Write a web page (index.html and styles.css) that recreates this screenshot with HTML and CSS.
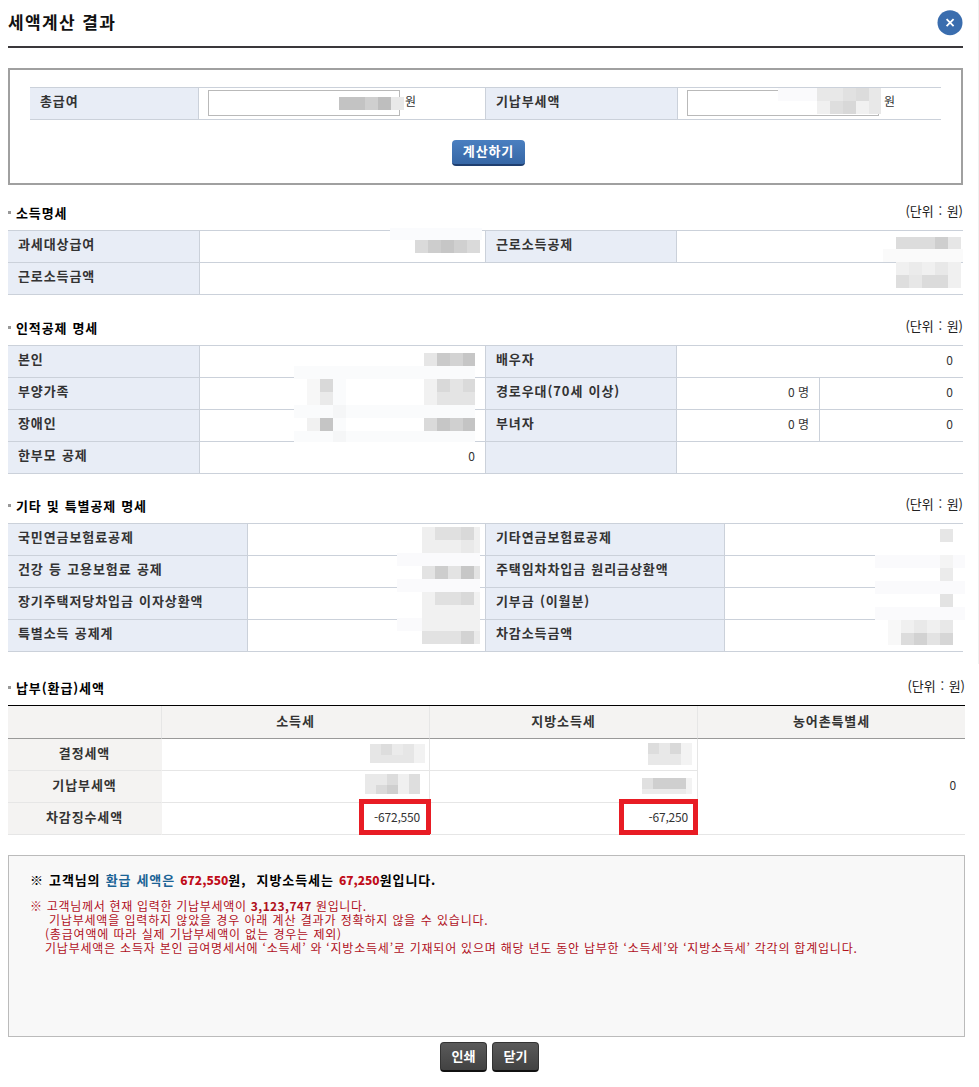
FILE: index.html
```html
<!DOCTYPE html>
<html lang="ko">
<head>
    <meta charset="UTF-8">
    <meta name="viewport" content="width=device-width, initial-scale=1.0">
    <title>세액계산 결과</title>
    <link rel="stylesheet" href="styles.css">
</head>
<body>
    <div class="popup">
        <div class="pop-header">
            <h1>세액계산 결과</h1>
            <button type="button" class="btn-x" aria-label="닫기">
                <svg width="26" height="26" viewBox="0 0 26 26">
                    <circle cx="13" cy="12.7" r="12.5" fill="#3a6dae"/>
                    <path d="M9.6 9.2 L16.6 16.2 M16.6 9.2 L9.6 16.2" stroke="#fff" stroke-width="1.8"/>
                </svg>
            </button>
        </div>

        <div class="calc-box">
            <div class="table-wrap">
                <table class="tbl tbl-form">
                    <colgroup><col class="f1"><col class="f2"><col class="f3"><col></colgroup>
                    <tr>
                        <th>총급여</th>
                        <td><div class="field"><input type="text"><span>원</span></div></td>
                        <th class="mid">기납부세액</th>
                        <td><div class="field"><input type="text"><span>원</span></div></td>
                    </tr>
                </table>
                <svg class="mosaic" viewBox="30 87 911 33" width="911" height="33">
                    <rect x="339" y="97" width="26" height="13" fill="#c3c3c3"/>
                    <rect x="365" y="97" width="13" height="13" fill="#cfcfcf"/>
                    <rect x="378" y="97" width="13" height="13" fill="#bebebe"/>
                    <rect x="391" y="97" width="13" height="13" fill="#e9e9e9"/>
                    <rect x="778" y="88" width="39" height="13" fill="#fafafc"/>
                    <rect x="817" y="88" width="64" height="26" fill="#e8e8e8"/>
                    <rect x="817" y="101" width="13" height="13" fill="#f0f0f0"/>
                    <rect x="830" y="101" width="13" height="13" fill="#dedede"/>
                    <rect x="843" y="88" width="13" height="13" fill="#e1e1e1"/>
                    <rect x="843" y="101" width="13" height="13" fill="#d8d8d8"/>
                    <rect x="856" y="88" width="13" height="13" fill="#dcdcdc"/>
                    <rect x="856" y="101" width="13" height="13" fill="#f1f1f1"/>
                </svg>
            </div>
            <button type="button" class="btn-calc">계산하기</button>
        </div>

        <div class="section sec1">
            <div class="sec-head"><h2>소득명세</h2><span class="unit">(단위 : 원)</span></div>
            <div class="table-wrap">
                <table class="tbl">
                    <colgroup><col class="c1"><col class="c2"><col class="c1"><col></colgroup>
                    <tr><th>과세대상급여</th><td></td><th class="mid">근로소득공제</th><td></td></tr>
                    <tr><th>근로소득금액</th><td colspan="3"></td></tr>
                </table>
                <svg class="mosaic" viewBox="8 230 955 65" width="955" height="65">
                    <rect x="390" y="228" width="92" height="12" fill="#fafbfd"/>
                    <rect x="415" y="240" width="65" height="13" fill="#dadada"/>
                    <rect x="428" y="240" width="13" height="13" fill="#cdcdcd"/>
                    <rect x="441" y="240" width="13" height="13" fill="#c6c6c6"/>
                    <rect x="454" y="240" width="13" height="13" fill="#d0d0d0"/>
                    <rect x="896" y="237" width="65" height="12" fill="#dcdcdc"/>
                    <rect x="935" y="237" width="13" height="12" fill="#cecece"/>
                    <rect x="948" y="237" width="13" height="12" fill="#e6e6e6"/>
                    <rect x="883" y="249" width="80" height="13" fill="#fafafa"/>
                    <rect x="896" y="262" width="65" height="26" fill="#f0f0f0"/>
                    <rect x="909" y="262" width="13" height="13" fill="#ebebeb"/>
                    <rect x="935" y="262" width="13" height="13" fill="#e8e8e8"/>
                    <rect x="896" y="275" width="13" height="13" fill="#dedede"/>
                    <rect x="909" y="275" width="13" height="13" fill="#e7e7e7"/>
                    <rect x="922" y="275" width="26" height="13" fill="#dbdbdb"/>
                </svg>
            </div>
        </div>

        <div class="section sec2">
            <div class="sec-head"><h2>인적공제 명세</h2><span class="unit">(단위 : 원)</span></div>
            <div class="table-wrap">
                <table class="tbl">
                    <colgroup><col class="c1"><col class="c2"><col class="c1"><col class="c3"><col></colgroup>
                    <tr><th>본인</th><td></td><th class="mid">배우자</th><td colspan="2">0</td></tr>
                    <tr><th>부양가족</th><td></td><th class="mid">경로우대(70세 이상)</th><td>0 명</td><td class="split">0</td></tr>
                    <tr><th>장애인</th><td></td><th class="mid">부녀자</th><td>0 명</td><td class="split">0</td></tr>
                    <tr><th>한부모 공제</th><td>0</td><th class="mid"></th><td colspan="2"></td></tr>
                </table>
                <svg class="mosaic" viewBox="8 345 955 129" width="955" height="129">
                    <rect x="424" y="353" width="13" height="13" fill="#e6e6e6"/>
                    <rect x="437" y="353" width="13" height="13" fill="#cacaca"/>
                    <rect x="450" y="353" width="13" height="13" fill="#d3d3d3"/>
                    <rect x="463" y="353" width="12" height="13" fill="#c6c6c6"/>
                    <rect x="294" y="366" width="181" height="13" fill="#fafbfc"/>
                    <rect x="333" y="366" width="13" height="75" fill="#fafbfc"/>
                    <rect x="307" y="379" width="13" height="26" fill="#f7f7f7"/>
                    <rect x="320" y="379" width="13" height="13" fill="#d9d9d9"/>
                    <rect x="320" y="392" width="13" height="13" fill="#eaeaea"/>
                    <rect x="424" y="379" width="51" height="26" fill="#e4e4e4"/>
                    <rect x="424" y="379" width="13" height="26" fill="#f1f1f1"/>
                    <rect x="437" y="379" width="13" height="13" fill="#d9d9d9"/>
                    <rect x="463" y="379" width="12" height="13" fill="#dadada"/>
                    <rect x="294" y="405" width="181" height="13" fill="#fafbfc"/>
                    <rect x="333" y="405" width="13" height="13" fill="#f5f6f7"/>
                    <rect x="307" y="418" width="13" height="13" fill="#f1f1f1"/>
                    <rect x="320" y="418" width="13" height="13" fill="#c5c5c5"/>
                    <rect x="424" y="418" width="13" height="13" fill="#dadada"/>
                    <rect x="437" y="418" width="13" height="13" fill="#c6c6c6"/>
                    <rect x="450" y="418" width="13" height="13" fill="#d0d0d0"/>
                    <rect x="463" y="418" width="12" height="13" fill="#c4c4c4"/>
                    <rect x="294" y="431" width="181" height="11" fill="#fafbfc"/>
                    <rect x="333" y="431" width="13" height="11" fill="#f5f6f7"/>
                </svg>
            </div>
        </div>

        <div class="section sec3">
            <div class="sec-head"><h2>기타 및 특별공제 명세</h2><span class="unit">(단위 : 원)</span></div>
            <div class="table-wrap">
                <table class="tbl">
                    <colgroup><col class="d1"><col class="d2"><col class="d1"><col></colgroup>
                    <tr><th>국민연금보험료공제</th><td></td><th class="mid">기타연금보험료공제</th><td></td></tr>
                    <tr><th>건강 등 고용보험료 공제</th><td></td><th class="mid">주택임차차입금 원리금상환액</th><td></td></tr>
                    <tr><th>장기주택저당차입금 이자상환액</th><td></td><th class="mid">기부금 (이월분)</th><td></td></tr>
                    <tr><th>특별소득 공제계</th><td></td><th class="mid">차감소득금액</th><td></td></tr>
                </table>
                <svg class="mosaic" viewBox="8 523 955 129" width="955" height="129">
                    <rect x="422" y="527" width="58" height="26" fill="#efefef"/>
                    <rect x="435" y="527" width="26" height="13" fill="#e0e0e0"/>
                    <rect x="461" y="527" width="13" height="13" fill="#d9d9d9"/>
                    <rect x="461" y="540" width="13" height="13" fill="#e9e9e9"/>
                    <rect x="397" y="553" width="83" height="13" fill="#fafafc"/>
                    <rect x="422" y="566" width="58" height="13" fill="#e3e3e3"/>
                    <rect x="435" y="566" width="13" height="13" fill="#cdcdcd"/>
                    <rect x="461" y="566" width="13" height="13" fill="#c7c7c7"/>
                    <rect x="397" y="579" width="83" height="13" fill="#fafafc"/>
                    <rect x="422" y="592" width="58" height="39" fill="#f1f1f1"/>
                    <rect x="435" y="592" width="26" height="13" fill="#e0e0e0"/>
                    <rect x="461" y="592" width="13" height="13" fill="#d9d9d9"/>
                    <rect x="397" y="618" width="25" height="13" fill="#fafafc"/>
                    <rect x="422" y="631" width="39" height="13" fill="#e2e2e2"/>
                    <rect x="461" y="631" width="13" height="13" fill="#d3d3d3"/>
                    <rect x="474" y="631" width="6" height="13" fill="#eaeaea"/>
                    <rect x="940" y="529" width="13" height="13" fill="#e6e6e6"/>
                    <rect x="875" y="555" width="90" height="13" fill="#fafafc"/>
                    <rect x="940" y="555" width="13" height="13" fill="#f4f4f4"/>
                    <rect x="940" y="568" width="13" height="13" fill="#ebebeb"/>
                    <rect x="875" y="581" width="90" height="13" fill="#fafafc"/>
                    <rect x="940" y="594" width="13" height="13" fill="#e3e3e3"/>
                    <rect x="875" y="607" width="90" height="13" fill="#fafafc"/>
                    <rect x="888" y="620" width="13" height="25" fill="#f8f8f8"/>
                    <rect x="901" y="620" width="52" height="25" fill="#f0f0f0"/>
                    <rect x="914" y="620" width="13" height="13" fill="#e9e9e9"/>
                    <rect x="940" y="620" width="13" height="13" fill="#e8e8e8"/>
                    <rect x="901" y="633" width="13" height="12" fill="#dcdcdc"/>
                    <rect x="914" y="633" width="13" height="12" fill="#d2d2d2"/>
                    <rect x="927" y="633" width="13" height="12" fill="#e3e3e3"/>
                    <rect x="940" y="633" width="13" height="12" fill="#d6d6d6"/>
                </svg>
            </div>
        </div>

        <div class="section sec4">
            <div class="sec-head"><h2>납부(환급)세액</h2><span class="unit">(단위 : 원)</span></div>
            <div class="table-wrap">
                <table class="tbl-tax">
                    <colgroup><col class="t1"><col class="t2"><col class="t2"><col></colgroup>
                    <thead>
                        <tr><th></th><th>소득세</th><th>지방소득세</th><th>농어촌특별세</th></tr>
                    </thead>
                    <tbody>
                        <tr><th>결정세액</th><td></td><td></td><td rowspan="3" class="last">0</td></tr>
                        <tr><th>기납부세액</th><td></td><td></td></tr>
                        <tr>
                            <th>차감징수세액</th>
                            <td class="marked">-672,550<i class="mark"></i></td>
                            <td class="marked">-67,250<i class="mark mark-wide"></i></td>
                        </tr>
                    </tbody>
                </table>
                <svg class="mosaic" viewBox="8 705 957 130" width="957" height="130">
                    <rect x="370" y="744" width="44" height="19" fill="#e6e6e6"/>
                    <rect x="381" y="744" width="11" height="11" fill="#dddddd"/>
                    <rect x="392" y="744" width="11" height="11" fill="#ebebeb"/>
                    <rect x="414" y="744" width="11" height="19" fill="#f2f2f2"/>
                    <rect x="365" y="774" width="55" height="20" fill="#e9e9e9"/>
                    <rect x="387" y="774" width="11" height="11" fill="#dcdcdc"/>
                    <rect x="376" y="785" width="11" height="9" fill="#dadada"/>
                    <rect x="387" y="785" width="11" height="9" fill="#cfcfcf"/>
                    <rect x="398" y="774" width="11" height="20" fill="#f0f0f0"/>
                    <rect x="409" y="774" width="11" height="20" fill="#dedede"/>
                    <rect x="648" y="743" width="33" height="22" fill="#e8e8e8"/>
                    <rect x="648" y="743" width="11" height="11" fill="#dddddd"/>
                    <rect x="670" y="743" width="11" height="11" fill="#d9d9d9"/>
                    <rect x="681" y="743" width="11" height="22" fill="#f3f3f3"/>
                    <rect x="642" y="778" width="44" height="16" fill="#ebebeb"/>
                    <rect x="653" y="778" width="33" height="11" fill="#cfcfcf"/>
                    <rect x="642" y="778" width="11" height="11" fill="#e0e0e0"/>
                    <rect x="686" y="778" width="6" height="16" fill="#f3f3f3"/>
                </svg>
            </div>
        </div>

        <div class="notice">
            <p class="total">※ 고객님의 <em>환급 세액은</em> <strong>672,550</strong>원,&nbsp; 지방소득세는 <strong>67,250</strong>원입니다.</p>
            <div class="notes">
                <p class="first">※ 고객님께서 현재 입력한 기납부세액이 <strong>3,123,747</strong> 원입니다.</p>
                <p class="second">기납부세액을 입력하지 않았을 경우 아래 계산 결과가 정확하지 않을 수 있습니다.</p>
                <p>(총급여액에 따라 실제 기납부세액이 없는 경우는 제외)</p>
                <p class="last-note">기납부세액은 소득자 본인 급여명세서에 ‘소득세’ 와 ‘지방소득세’로 기재되어 있으며 해당 년도 동안 납부한 ‘소득세’와 ‘지방소득세’ 각각의 합계입니다.</p>
            </div>
        </div>

        <div class="btns">
            <button type="button" class="btn-dark">인쇄</button>
            <button type="button" class="btn-dark">닫기</button>
        </div>
    </div>
</body>
</html>
```
FILE: styles.css
```css
* {
    box-sizing: border-box;
}
body {
    margin: 0;
    background: #fff;
    color: #333;
    font-family: "Noto Sans CJK KR", sans-serif;
    font-size: 13px;
    line-height: 16px;
}
h1, h2, p {
    margin: 0;
}
button {
    font-family: inherit;
    cursor: pointer;
}
.popup {
    width: 979px;
    height: 1087px;
    padding: 0 16px 0 8px;
    background: linear-gradient(#f1f1f1, #f1f1f1) no-repeat right top / 1px 664px;
}

/* header */
.pop-header {
    display: flex;
    justify-content: space-between;
    height: 48px;
    border-bottom: 2px solid #3a383b;
}
h1 {
    padding-top: 10px;
    color: #111;
    font-size: 17px;
    line-height: 24px;
    letter-spacing: 1.4px;
}
.btn-x {
    width: 26px;
    height: 26px;
    margin-top: 10px;
    padding: 0;
    border: 0;
    background: none;
}
.btn-x svg {
    display: block;
}

/* input box */
.calc-box {
    height: 117px;
    margin-top: 20px;
    padding: 17px 20px 0;
    border: 2px solid #a0a0a0;
    text-align: center;
}
.field {
    display: flex;
}
.field input {
    width: 192px;
    height: 26px;
    padding: 0 4px;
    border: 1px solid #b9b9b9;
}
.field span {
    margin: 3px 0 0 5px;
    font-size: 12px;
}
.btn-calc {
    width: 73px;
    height: 26px;
    margin: 20px 0 0 6px;
    padding: 0 0 3px;
    border: 0;
    border-bottom: 2px solid #1f3f70;
    border-radius: 4px;
    background: linear-gradient(#4a7fc0, #3667a6);
    color: #fff;
    font-size: 13px;
    font-weight: bold;
    line-height: 20px;
    letter-spacing: 0.9px;
}

/* common tables */
.table-wrap {
    position: relative;
}
.mosaic {
    position: absolute;
    top: 0;
    left: 0;
    overflow: visible;
    pointer-events: none;
}
table {
    width: 100%;
    table-layout: fixed;
    border-collapse: separate;
    border-spacing: 0;
}
.tbl {
    border-top: 1px solid #cbd1da;
}
.tbl th, .tbl td {
    height: 32px;
    border-bottom: 1px solid #cbd1da;
}
.tbl th {
    padding: 0 0 5px 10px;
    border-right: 1px solid #cbd1da;
    background: #e8edf6;
    text-align: left;
    letter-spacing: 0.9px;
    word-spacing: 0.8px;
}
.tbl td {
    padding: 0 10px 3px;
    text-align: right;
    font-size: 12px;
}
.tbl th.mid, .tbl td.split {
    border-left: 1px solid #cbd1da;
}
.tbl.tbl-form td {
    padding: 0 0 2px 9px;
}
.f1 { width: 169px; }
.f2 { width: 286px; }
.f3 { width: 193px; }
.c1 { width: 192px; }
.c2 { width: 285px; }
.c3 { width: 142px; }
.d1 { width: 240px; }
.d2 { width: 237px; }

.sec-head {
    display: flex;
    justify-content: space-between;
    height: 27px;
}
.sec1 { margin-top: 18px; }
.sec2 { margin-top: 23px; }
.sec3 { margin-top: 22px; }
.sec4 { margin-top: 26px; width: 957px; }
h2 {
    display: flex;
    align-items: center;
    height: 19px;
    color: #000;
    font-size: 13px;
    letter-spacing: 0.9px;
    word-spacing: 0.5px;
}
h2::before {
    content: "";
    width: 3px;
    height: 3px;
    margin: 0 5px 0 0;
    background: #999;
}
.unit {
    color: #222;
    line-height: 16px;
    word-spacing: 1px;
}

/* tax table */
.tbl-tax {
    border-top: 1px solid #000;
}
.tbl-tax th, .tbl-tax td {
    height: 32px;
    border-right: 1px solid #e6e6e6;
    border-bottom: 1px solid #e6e6e6;
}
.tbl-tax th {
    padding: 0 0 3px;
    background: #f4f3f2;
    letter-spacing: 0.9px;
}
.tbl-tax thead th {
    height: 33px;
    border-bottom-color: #999;
}
.tbl-tax thead th:last-child, .tbl-tax td.last {
    border-right: 0;
}
.tbl-tax tbody th {
    border-right-color: #f4f3f2;
}
.tbl-tax td {
    padding: 0 9px 3px;
    text-align: right;
    font-size: 12px;
    letter-spacing: -0.2px;
}
.t1 { width: 154px; }
.t2 { width: 268px; }
.marked {
    position: relative;
}
.mark {
    position: absolute;
    right: -2px;
    bottom: -1px;
    width: 72px;
    height: 36px;
    border: 5px solid #e81c24;
}
.mark-wide {
    right: -1px;
    width: 79px;
}

/* notice */
.notice {
    width: 957px;
    height: 182px;
    margin-top: 20px;
    padding: 15px 21px 0;
    border: 1px solid #bbb;
    background: #f8f8f8;
}
.total {
    color: #000;
    font-weight: bold;
    line-height: 18px;
    letter-spacing: 0.9px;
    word-spacing: 0.6px;
}
.total em {
    color: #1c6496;
    font-style: normal;
}
.total strong {
    color: #c00d1a;
    font-size: 12px;
    letter-spacing: 0;
}
.notes {
    margin-top: 10px;
    color: #b0101c;
    font-size: 12px;
    line-height: 14px;
    letter-spacing: 0.8px;
    word-spacing: 0.3px;
}
.notes p {
    padding-left: 15px;
    white-space: nowrap;
}
.notes .first {
    padding-left: 0;
    letter-spacing: 0.7px;
    word-spacing: 0;
}
.notes .first strong {
    letter-spacing: 0.4px;
}
.notes .second {
    padding-left: 19px;
}
.notes .last-note {
    word-spacing: -0.1px;
}

.btns {
    display: flex;
    justify-content: center;
    gap: 5px;
    margin: 5px 0 0 8px;
}
.btn-dark {
    width: 47px;
    height: 30px;
    padding: 0 0 2px;
    border: 1px solid #333;
    border-bottom: 2px solid #111;
    border-radius: 4px;
    background: linear-gradient(#5a5a5a, #424242);
    color: #fff;
    font-size: 13px;
    font-weight: bold;
    line-height: 20px;
}
```
